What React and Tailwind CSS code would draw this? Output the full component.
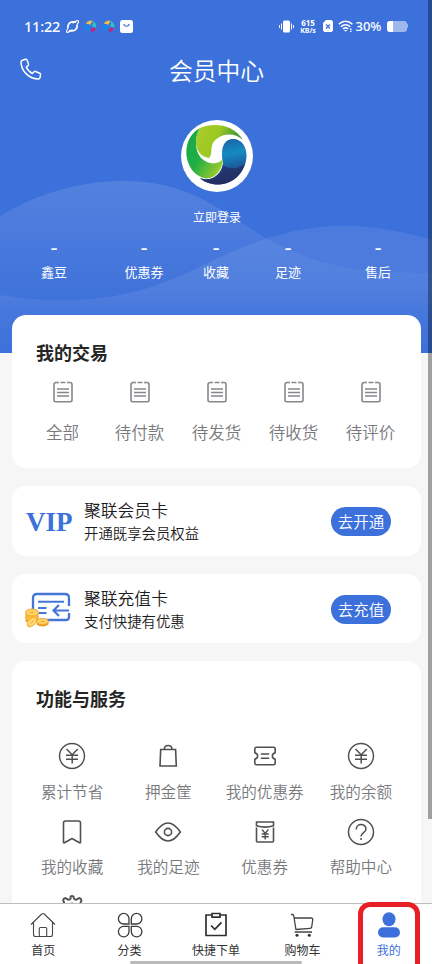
const STATS = ["鑫豆", "优惠券", "收藏", "足迹", "售后"];

const ORDERS = ["全部", "待付款", "待发货", "待收货", "待评价"];

function StatusBar() {
  return (
    <div className="flex h-[52px] items-center pl-6 pr-[24px] text-white">
      <span className="w-[38px] whitespace-nowrap font-['Noto_Sans'] text-[14.5px] font-medium leading-none tracking-[-0.2px]">11:22</span>
      <svg className="ml-1" width="13" height="13" viewBox="0 0 13 13" fill="none" stroke="currentColor">
        <path d="M2 8.5C1 3.5 5 .8 10 2.300M11 4.5c1 5-3 7.500-8 6.100" strokeWidth="1.6" />
        <path d="M2 8.500C.4 10.500 0 12 1 12.300c1.200.3 3.300-1 5.500-2.800M11 4.500C12.600 2.500 13 1 12 .7 10.800.4 8.700 1.500 6.500 3.300" strokeWidth="1.1" />
      </svg>
      <Pinwheel className="ml-[6px]" />
      <Pinwheel className="ml-[6px]" />
      <svg className="ml-[5px]" width="13" height="13" viewBox="0 0 13 13">
        <rect width="13" height="13" rx="2.5" fill="#fff" />
        <path d="M3.8 4c.5 3 4.900 3 5.400 0" stroke="#3c70da" strokeWidth="1.2" fill="none" />
      </svg>
      <div className="ml-auto flex items-center">
        <svg width="15" height="13" viewBox="0 0 15 13" fill="none" stroke="#fff">
          <rect x="4" y=".5" width="7" height="12" rx="1.5" fill="#fff" stroke="none" />
          <path d="M2.500 3.500v6M.5 5v3M12.500 3.500v6M14.500 5v3" />
        </svg>
        <div className="ml-[5px] flex w-[19px] flex-col items-center font-['Noto_Sans'] font-bold">
          <span className="text-[8px] leading-[9px]">615</span>
          <span className="whitespace-nowrap text-[7px] leading-[8px]">KB/s</span>
        </div>
        <svg className="ml-[5px]" width="10" height="12" viewBox="0 0 10 12">
          <path d="M3 0h5.500L10 1.500v9L8.500 12h-7L0 10.500V3z" fill="#fff" />
          <path d="m3 4.500 4 4m0-4-4 4" stroke="#3c70da" strokeWidth="1.300" />
        </svg>
        <svg className="ml-[5px]" width="16" height="12" viewBox="0 0 16 12" fill="none" stroke="#fff" strokeWidth="1.500">
          <path d="M.8 4.200c4-3.800 9.600-3.800 13.600 0M2.800 6.800c3-2.600 6.500-2.600 9.500 0M4.800 9c1.900-1.500 3.800-1.500 5.500 0" />
          <path d="m5.900 10 1.700 1.800L9.300 10z" fill="#fff" stroke="none" />
          <path d="M12.800 8.500v3.500" strokeWidth="1.400" strokeDasharray="1.500 .8" />
        </svg>
        <span className="ml-[2px] w-[28px] whitespace-nowrap font-['Noto_Sans'] text-[13px] font-medium leading-none">30%</span>
        <div className="ml-[3px] h-[11px] w-[20px] overflow-hidden rounded-[3px] bg-white/50">
          <div className="h-full w-[6px] bg-white" />
        </div>
        <div className="h-[4px] w-[1.5px] rounded-r bg-white/50" />
      </div>
    </div>
  );
}

function Pinwheel({ className }) {
  return (
    <svg className={className} width="12" height="12" viewBox="0 0 12 12">
      <path d="M.8 4.500Q2.500 6 5 5.500Q2.500 8 5.500 11.300Q-.8 10.500.8 4.500" fill="#1587ef" stroke="#1587ef" />
      <path d="M1.300 3.500Q3 .2 7.200 1.200Q5.500 2.500 5.200 4.500Q3.500 3 1.300 3.500" fill="#fbc540" stroke="#fbc540" strokeWidth=".7" />
      <path d="M8 1.300Q12 3.500 10.800 7.500Q9.500 6 7 6Q9 4 8 1.300" fill="#2fc4c2" stroke="#2fc4c2" strokeWidth=".7" />
      <path d="M10.500 8.500Q9 12 5.800 11.300Q7 10 6.800 8Q8.500 9 10.500 8.500" fill="#d81e70" stroke="#d81e70" strokeWidth=".8" />
    </svg>
  );
}

function Waves() {
  return (
    <svg className="absolute inset-0" width="432" height="353" viewBox="0 0 432 353">
      <defs>
        <linearGradient id="waveA" x1="0" y1="180" x2="0" y2="315" gradientUnits="userSpaceOnUse">
          <stop offset="0" stopColor="#fff" stopOpacity=".12" />
          <stop offset="1" stopColor="#fff" stopOpacity="0" />
        </linearGradient>
        <linearGradient id="waveB" x1="0" y1="225" x2="0" y2="353" gradientUnits="userSpaceOnUse">
          <stop offset="0" stopColor="#fff" stopOpacity=".08" />
          <stop offset=".5" stopColor="#fff" stopOpacity=".08" />
          <stop offset="1" stopColor="#fff" stopOpacity="0" />
        </linearGradient>
      </defs>
      <path d="M0 216C45 190 85 181 124 181C190 181 222 212 266 238C312 264 350 273 432 273V353H0Z" fill="url(#waveA)" />
      <path d="M0 295C70 306 128 300 185 274C250 242 290 226 344 226C376 226 405 232 432 240V353H0Z" fill="url(#waveB)" />
    </svg>
  );
}

function Avatar() {
  return (
    <svg width="72" height="72" viewBox="0 0 72 72">
      <defs>
        <linearGradient id="lime" x1="0" y1="0" x2="1" y2=".3">
          <stop offset="0" stopColor="#a9cb2d" />
          <stop offset=".5" stopColor="#9dc922" />
          <stop offset="1" stopColor="#278c3c" />
        </linearGradient>
        <linearGradient id="green" x1="0" y1="0" x2="1" y2=".8">
          <stop offset="0" stopColor="#19a84a" />
          <stop offset=".5" stopColor="#20ae45" />
          <stop offset="1" stopColor="#a5cd2c" />
        </linearGradient>
        <linearGradient id="ocean" x1=".4" y1="0" x2=".6" y2="1">
          <stop offset="0" stopColor="#1b5f9f" />
          <stop offset=".35" stopColor="#158bc2" />
          <stop offset=".65" stopColor="#1b5c9c" />
          <stop offset="1" stopColor="#252b61" />
        </linearGradient>
      </defs>
      <circle cx="36" cy="36" r="36" fill="#fff" />
      <path d="M19 58C29 62 40 56 42 43C39 28 43 19 52 19C61 19 66 27 65.500 37C64 54 51 65 35 64.500C29 64 23 62 19 58Z" fill="url(#ocean)" />
      <path d="M19 58C29 62 40 57 42 45C48 50 57 49 64 44C59 58 49 65 35 64.500C29 64 23 62 19 58Z" fill="#252b61" opacity=".75" />
      <path d="M19 8C1 17 1 46 18 56C29 63 41 54 42 39C37 45 27 45 20 38C14 31 13 18 19 8Z" fill="url(#green)" />
      <path d="M19 8C32 2 53 4 62 20C52 11 38 14 32 23C29 29 32 33 28 38C20 37 15 30 15 23C15 17 16 12 19 8Z" fill="url(#lime)" />
    </svg>
  );
}

function ListIcon() {
  return (
    <svg width="20" height="22" viewBox="0 0 20 22" fill="none" stroke="#85878c" strokeWidth="1.600">
      <path d="M4 1.500H3A2 2 0 0 0 1 3.500V19a1.700 1.700 0 0 0 1.700 1.700h14.600A1.700 1.700 0 0 0 19 19V3.500a2 2 0 0 0-2-2h-1M7.500 1.500h5M5 .5v2M15 .5v2M4 8h12M4 11.500h12M4 15h12" />
    </svg>
  );
}

function YenIcon() {
  return (
    <svg width="28" height="28" viewBox="0 0 28 28" fill="none" stroke="#505050" strokeWidth="1.500">
      <circle cx="14" cy="14" r="12.500" />
      <path d="m8.500 7 5.700 5.700L19.800 7M8 13.300h12M8 17.300h12M14.200 12.500v9" />
    </svg>
  );
}

function BagIcon() {
  return (
    <svg width="28" height="28" viewBox="0 0 28 28" fill="none" stroke="#505050" strokeWidth="1.600">
      <path d="M6.700 7.500h14.900L22.300 24H6z" />
      <path d="M10.300 7.500c0-5.300 7.700-5.300 7.700 0" />
    </svg>
  );
}

function TicketIcon() {
  return (
    <svg width="28" height="28" viewBox="0 0 28 28" fill="none" stroke="#505050" strokeWidth="1.600" strokeLinejoin="round">
      <path d="M5.500 5.300h17q1.700 0 1.700 1.700v3.500l-2.700 2v3l2.700 2V21q0 1.700-1.700 1.700h-17Q3.800 22.700 3.800 21v-3.500l2.700-2v-3l-2.700-2V7q0-1.700 1.700-1.700M9.800 12h8.400M9.800 16.200h8.400" />
    </svg>
  );
}

function BookmarkIcon() {
  return (
    <svg width="28" height="28" viewBox="0 0 28 28" fill="none" stroke="#505050" strokeWidth="1.600" strokeLinejoin="round">
      <path d="M7.500 3h13q2 0 2 2v19.200q0 1-1 .5L14 20.500l-7.500 4.200q-1 .5-1-.5V5q0-2 2-2" />
    </svg>
  );
}

function EyeIcon() {
  return (
    <svg width="28" height="28" viewBox="0 0 28 28" fill="none" stroke="#505050" strokeWidth="1.600">
      <path d="M1.700 14Q8 5 14 5t12.300 9Q20 23 14 23T1.700 14Z" />
      <circle cx="14" cy="14" r="3.600" />
    </svg>
  );
}

function EnvelopeIcon() {
  return (
    <svg width="28" height="28" viewBox="0 0 28 28" fill="none" stroke="#505050" strokeWidth="1.600">
      <path d="M5.500 4h17v3.800q-8.500 2.700-17 0Zm0 5.500V23q0 1 1 1h15q1 0 1-1V9.500" />
      <path d="m11 11.500 3.200 4 3.200-4M10.700 16h7M10.700 18.700h7M14.200 15.500v6" strokeWidth="1.400" />
    </svg>
  );
}

function HelpIcon() {
  return (
    <svg width="28" height="28" viewBox="0 0 28 28" fill="none" stroke="#505050" strokeWidth="1.500">
      <circle cx="14" cy="14" r="12.500" />
      <path d="M9.200 11.500c0-6.600 9.800-6.400 9.800-.5 0 3.700-5 3.500-5 7.500M14 20v2" />
    </svg>
  );
}

function GearIcon() {
  return (
    <svg width="28" height="28" viewBox="0 0 28 28" fill="none" stroke="#505050" strokeWidth="1.900" strokeLinejoin="round">
      <path d="M12.500 3.500q1.500-1 3 0l.4 2q1.500 2 3.500.6l1.800-1.100q2 .3 2.300 2.300l-1 2.200 1 3.100 2 .8v2.600l-2 .8-1 2.500 1 2.500-2 2-2.600-1.200-2.300 1-.8 2.400h-3l-.8-2.400-2.300-1L7.100 23.800l-2-2 1-2.500-1-2.500-2-.8v-2.600l2-.8 1-3.100-1-2.200q.3-2 2.300-2.300l1.800 1.100q2 1.400 3.500-.6Z" />
      <circle cx="14" cy="14.500" r="4" />
    </svg>
  );
}

const SERVICES = [
  ["累计节省", YenIcon],
  ["押金筐", BagIcon],
  ["我的优惠券", TicketIcon],
  ["我的余额", YenIcon],
  ["我的收藏", BookmarkIcon],
  ["我的足迹", EyeIcon],
  ["优惠券", EnvelopeIcon],
  ["帮助中心", HelpIcon],
];

function RechargeIcon() {
  return (
    <svg className="mt-[3px]" width="47" height="36" viewBox="0 0 47 36" fill="none">
      <path d="M9 18V6q0-4 4-4h28q4 0 4 4v8M45 21v4q0 3-3 3H23" stroke="#4376d5" strokeWidth="2.300" />
      <path d="M14 9.700h26M14 16h8.500M14 21h8.500" stroke="#4376d5" strokeWidth="2" />
      <path d="M45 18.500H30M35 13l-5.500 5.500L35 24" stroke="#4376d5" strokeWidth="2.200" />
      <path d="M1.500 20v10h13V20z" fill="#eca12d" />
      <ellipse cx="8" cy="25.500" rx="7" ry="3.500" fill="#f9b93e" />
      <ellipse cx="8" cy="20.500" rx="6.500" ry="3.500" fill="#ffd166" stroke="#f0aa36" />
      <path d="M12.500 30v2.500q6 4 12 0V30z" fill="#e99a26" />
      <ellipse cx="18.500" cy="29.500" rx="6" ry="3" fill="#ffd166" stroke="#eea52f" />
      <ellipse cx="7.500" cy="30.500" rx="5.500" ry="3.800" fill="#f9b936" transform="rotate(-45 7.500 30.500)" />
      <ellipse cx="8" cy="30" rx="4.500" ry="2.700" fill="#ffda79" transform="rotate(-45 8 30)" />
      <path d="m6.500 31.500 3-3M17 30l3-.7M6.500 20.300l3 .5" stroke="#eaa22c" />
    </svg>
  );
}

function PromoCard({ icon, title, note, action }) {
  return (
    <section className="flex h-[69.500px] items-center rounded-[14px] bg-white pl-3 pr-[30px]">
      <div className="flex w-[60px] shrink-0 items-center">{icon}</div>
      <div className="font-[350] text-[#1c1c1c]">
        <div className="text-[16.8px] leading-[25px]">{title}</div>
        <div className="-mt-px text-[14.400px] leading-[21px]">{note}</div>
      </div>
      <button type="button" className="ml-auto mt-[2px] h-[29px] w-[60px] whitespace-nowrap rounded-full bg-[#3c70da] text-[15.5px] font-[350] leading-[29px] text-white">
        {action}
      </button>
    </section>
  );
}

function HomeIcon() {
  return (
    <svg width="26" height="26" viewBox="0 0 26 26" fill="none" stroke="#484848" strokeWidth="1.100" strokeLinejoin="round">
      <path d="M1 12.500 11.800 2q1.200-1 2.400 0L25 12.500M3.500 10.500v12q0 2 2 2h15q2 0 2-2v-12M9.300 24.500v-8q0-1 1-1h5.400q1 0 1 1v8" />
    </svg>
  );
}

function CategoryIcon() {
  return (
    <svg width="26" height="26" viewBox="0 0 26 26" fill="none" stroke="#3c3c3c" strokeWidth="1.300">
      <path d="M12 12H6.700A5.300 5.300 0 1 1 12 6.700ZM14.300 12V6.700a5.300 5.300 0 1 1 5.300 5.300ZM12 14.300v5.300a5.300 5.300 0 1 1-5.300-5.300ZM14.300 14.300h5.300a5.300 5.300 0 1 1-5.300 5.300Z" />
    </svg>
  );
}

function OrderIcon() {
  return (
    <svg width="26" height="26" viewBox="0 0 26 26" fill="none" stroke="#303030" strokeWidth="1.700">
      <path d="M8.500 3H3v20.500h20V3h-5.500M9 1.500h8v3.700H9ZM8 13.500l3.800 3.800 6.700-7" />
    </svg>
  );
}

function CartIcon() {
  return (
    <svg width="26" height="26" viewBox="0 0 26 26" fill="none" stroke="#444" strokeWidth="1.300">
      <path d="M2 2.500h1.500q1 0 1.200 1L7 18M5.500 6H22q2 0 1.700 2l-1 7q-.3 1.300-1.500 1.300L7 17.500M5.700 20H23" />
      <circle cx="8" cy="23.300" r="1.500" fill="#333" stroke="none" />
      <circle cx="20.300" cy="23.300" r="1.500" fill="#333" stroke="none" />
    </svg>
  );
}

function UserIcon() {
  return (
    <svg width="26" height="28" viewBox="0 0 26 28" fill="#3c70da">
      <ellipse cx="13" cy="8.200" rx="6.500" ry="7" />
      <rect x="2" y="16.300" width="22" height="10.200" rx="5.100" />
    </svg>
  );
}

const TABS = [
  ["首页", HomeIcon],
  ["分类", CategoryIcon],
  ["快捷下单", OrderIcon],
  ["购物车", CartIcon],
  ["我的", UserIcon],
];

function TabBar() {
  return (
    <nav className="relative grid h-[61px] shrink-0 grid-cols-5 border-t border-[#bdbdbd] bg-white text-[12px] text-[#333]">
      {TABS.map(([label, Icon]) => (
        <div key={label} className={`flex flex-col items-center pt-[7px] ${label === "我的" ? "text-[#3c70da]" : ""}`}>
          <div className="flex h-[28px] items-center">
            <Icon />
          </div>
          <span className="mt-[2px] leading-[18px]">{label}</span>
        </div>
      ))}
      <div className="absolute bottom-0 left-[130px] h-[3px] w-[172px] rounded-full bg-[#b9b9b9]" />
      <div className="absolute -top-[2px] left-[358px] h-[80px] w-[62px] rounded-[12px] border-[5px] border-[#e71f27]" />
    </nav>
  );
}

export default function App() {
  return (
    <div className="relative flex h-[964px] w-[432px] flex-col overflow-hidden bg-[#f6f6f6] font-['Noto_Sans_CJK_SC',sans-serif]">
      <main className="min-h-0 flex-1 overflow-hidden">
        <header className="relative h-[353px] bg-[#3c70da] text-white">
          <Waves />
          <div className="relative">
            <StatusBar />
            <div className="grid h-[38px] grid-cols-[1fr_auto_1fr] items-center pl-px">
              <svg className="ml-[19px] mt-[-4px]" width="22" height="22" viewBox="0 0 22 22" fill="none" stroke="#fff" strokeWidth="1.500" strokeLinejoin="round">
                <path d="M2 2.500 5.500 1.200q1-.2 1.500.8l1.500 4q.3 1-.5 1.700L6.300 9q1.500 4 6 6.500l1.700-1.700q.7-.7 1.700-.3l4 1.700q1 .5.800 1.500l-.5 3q-.3 1.300-1.500 1.300C9 21 1.200 13 1 4q0-1 1-1.500Z" />
              </svg>
              <h1 className="-mt-[2px] text-[23.800px] font-[350] leading-[36px]">会员中心</h1>
            </div>
            <div className="mt-[30px] flex flex-col items-center pl-[2px]">
              <Avatar />
              <span className="mt-[16px] text-[12px] leading-[18px]">立即登录</span>
            </div>
            <div className="mt-[11px] grid grid-cols-[3fr_2fr_2fr_2fr_3fr] text-center text-[13px]">
              {STATS.map((label) => (
                <div key={label}>
                  <div className="h-[25px] text-[20px] font-medium leading-[20px]">-</div>
                  <div className="leading-[20px]">{label}</div>
                </div>
              ))}
            </div>
          </div>
        </header>

        <div className="relative -mt-[38px] ml-3 flex w-[409px] flex-col gap-[18px]">
          <section className="h-[153px] rounded-[14px] bg-white px-3 pt-[23px]">
            <h2 className="pl-3 text-[18px] font-bold leading-[28px] text-[#252525]">我的交易</h2>
            <div className="mt-[15px] grid grid-cols-5">
              {ORDERS.map((label) => (
                <div key={label} className="flex flex-col items-center">
                  <ListIcon />
                  <span className="mt-[17px] text-[16.500px] font-[350] leading-[24px] text-[#77797d]">{label}</span>
                </div>
              ))}
            </div>
          </section>

          <PromoCard
            icon={<span className="ml-[2px] mt-[4px] font-['Liberation_Serif',serif] text-[27px] font-bold leading-none text-[#3c70da]">VIP</span>}
            title="聚联会员卡"
            note="开通既享会员权益"
            action="去开通"
          />
          <PromoCard icon={<RechargeIcon />} title="聚联充值卡" note="支付快捷有优惠" action="去充值" />

          <section className="h-[320px] rounded-[14px] bg-white px-3 pt-[23px]">
            <h2 className="pl-3 text-[18px] font-bold leading-[28px] text-[#252525]">功能与服务</h2>
            <div className="mt-[30px] grid grid-cols-4">
              {SERVICES.map(([label, Icon]) => (
                <div key={label} className="flex h-[75.500px] flex-col items-center">
                  <Icon />
                  <span className="mt-[8.5px] whitespace-nowrap text-[15.600px] font-[350] leading-[24px] text-[#77797d]">{label}</span>
                </div>
              ))}
              <div className="flex justify-center">
                <GearIcon />
              </div>
            </div>
          </section>
        </div>
      </main>
      <TabBar />
      <div className="absolute right-0 top-0 h-[819px] w-[4px] bg-black/35" />
    </div>
  );
}
